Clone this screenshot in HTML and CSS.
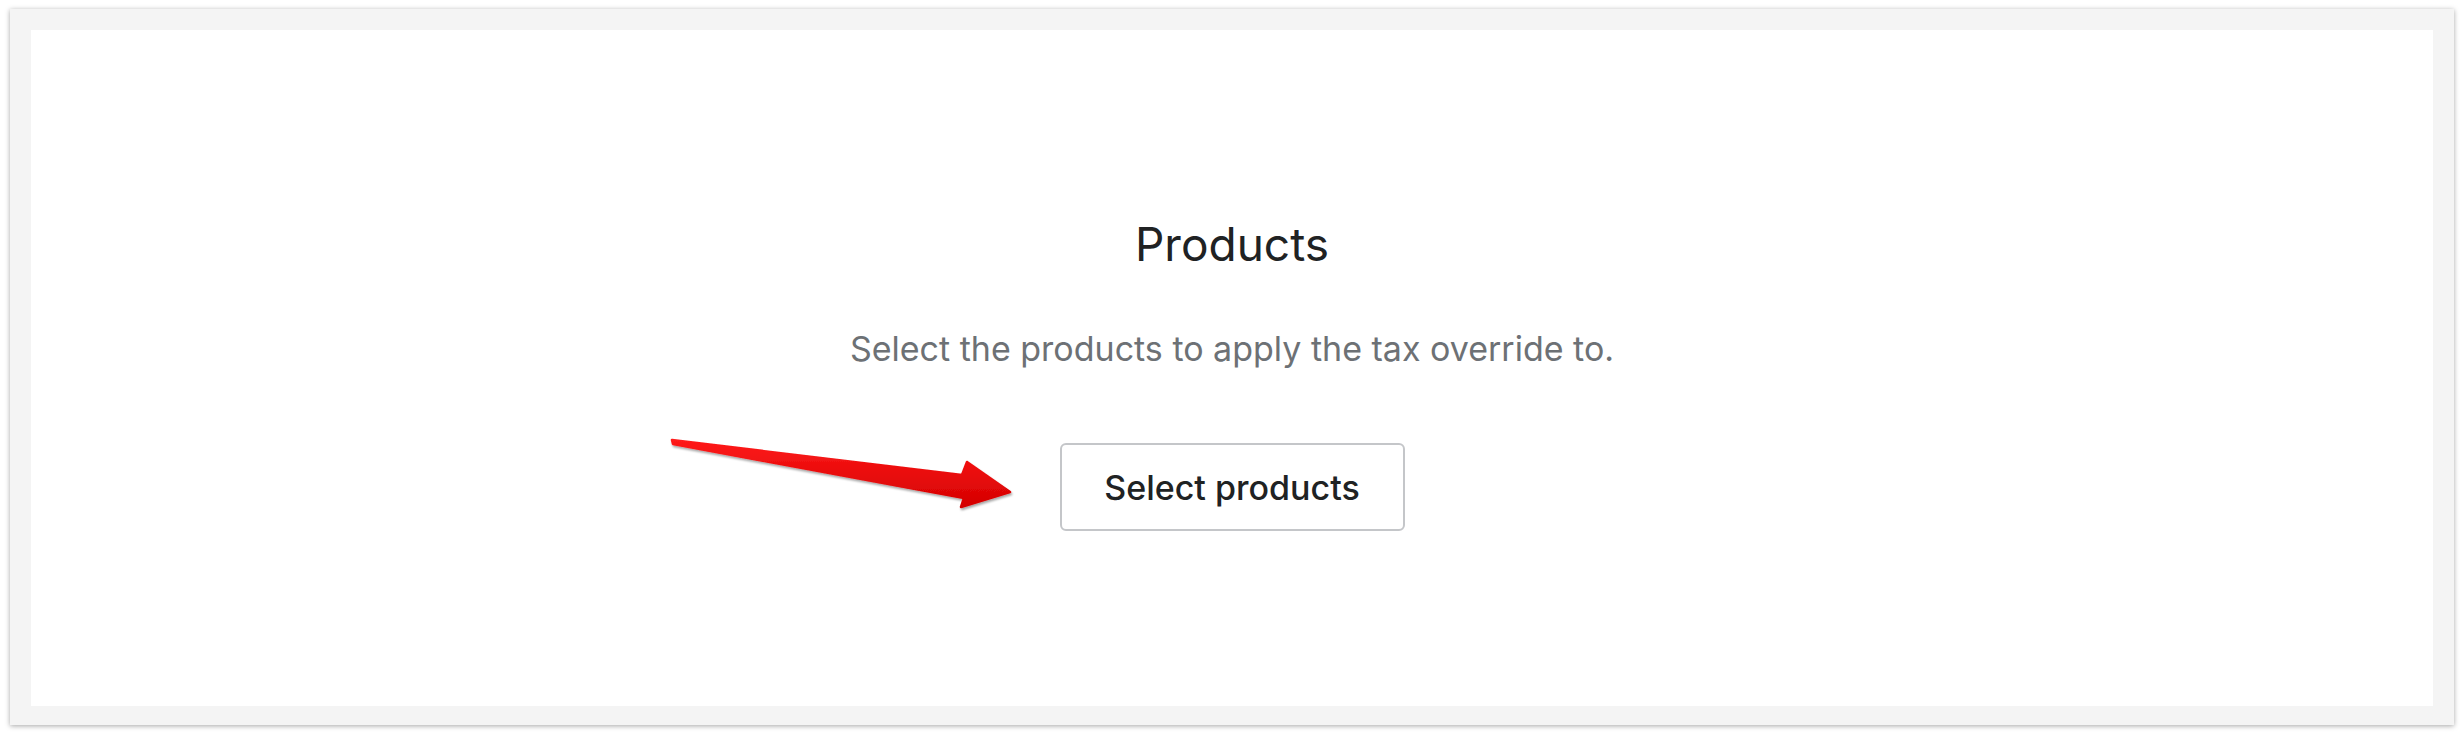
FILE: index.html
```html
<!DOCTYPE html>
<html lang="en">
<head>
    <meta charset="UTF-8">
    <title>Products</title>
    <link rel="stylesheet" href="styles.css">
</head>
<body>
    <div class="frame">
        <div class="card">
            <div class="empty">
                <h2 class="title">Products</h2>
                <p class="text">Select the products to apply the tax override to.</p>
                <button class="btn">Select products</button>
            </div>

            <!-- annotation arrow pointing at the button -->
            <svg class="arrow" width="380" height="110" viewBox="0 0 380 110">
                <defs>
                    <linearGradient id="red" x1="0" y1="0" x2="0" y2="1">
                        <stop offset="0" stop-color="#ff1a1a"/>
                        <stop offset="1" stop-color="#d40000"/>
                    </linearGradient>
                    <filter id="shade" x="-10%" y="-30%" width="120%" height="160%">
                        <feDropShadow dx="1" dy="2" stdDeviation="1.2" flood-color="#000" flood-opacity="0.35"/>
                    </filter>
                </defs>
                <path d="M12 10 L302 45 L307 32 L350 62 L301 77 L304 68 L13 14 Z"
                      fill="url(#red)" stroke="url(#red)" stroke-width="2.5" stroke-linejoin="round" filter="url(#shade)"/>
            </svg>
        </div>
    </div>
</body>
</html>
```

FILE: styles.css
```css
*{
    box-sizing: border-box;
}

body{
    margin: 0;
    background-color: #ffffff;
    font-family: Inter, "Noto Sans", sans-serif;
}

.frame{
    margin: 9px 10px;
    height: 716px;
    padding: 21px 21px 19px 21px;
    background-color: #f4f4f4;
    box-shadow: 0 1px 5px rgba(0, 0, 0, 0.35);
}

.card{
    position: relative;
    height: 100%;
    background-color: #ffffff;
}

.empty{
    display: flex;
    flex-direction: column;
    align-items: center;
    padding-top: 184px;
}

.title{
    margin: 0;
    font-size: 46px;
    font-weight: 400;
    line-height: 60px;
    color: #202223;
}

.text{
    margin: 53px 0 0;
    font-size: 34px;
    line-height: 44px;
    color: #6d7175;
}

.btn{
    margin-top: 72px;
    width: 345px;
    height: 88px;
    background-color: #ffffff;
    border: 2px solid #c4c6c9;
    border-radius: 6px;
    font-family: Inter, "Noto Sans", sans-serif;
    font-size: 34px;
    font-weight: 500;
    color: #202223;
}

.arrow{
    position: absolute;
    left: 629px;
    top: 400px;
}
```
